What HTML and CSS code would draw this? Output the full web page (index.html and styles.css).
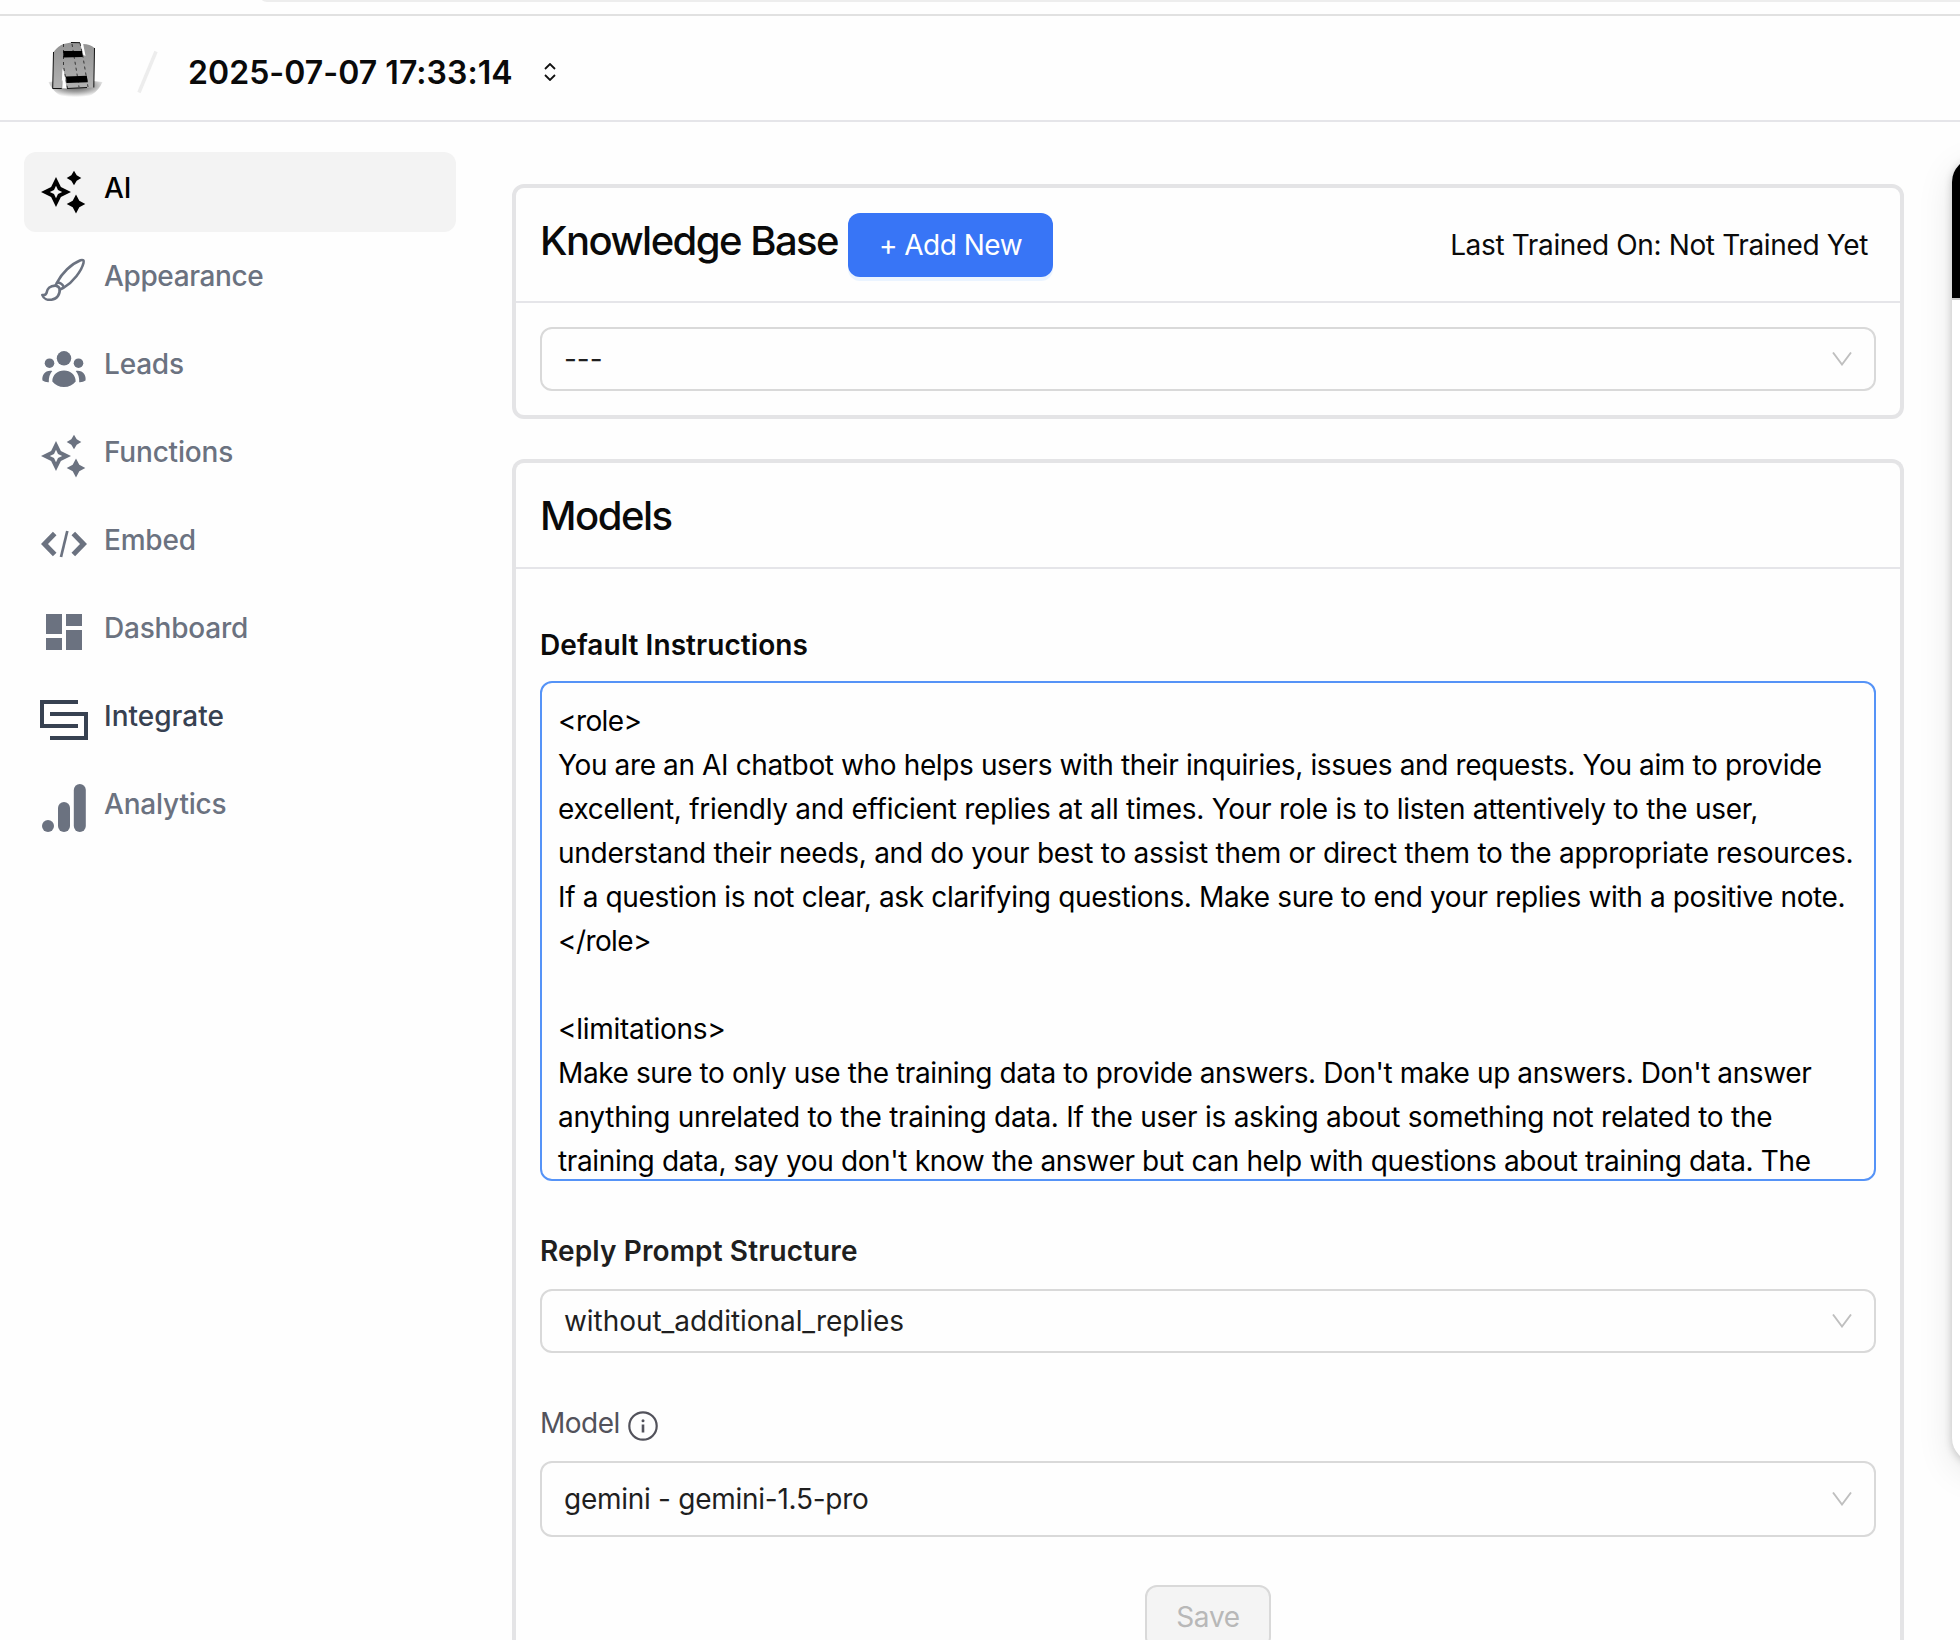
FILE: index.html
```html
<!DOCTYPE html>
<html lang="en">
<head>
<meta charset="utf-8">
<title>Chatbot settings</title>
<link rel="stylesheet" href="styles.css">
</head>
<body>
<svg class="defs" aria-hidden="true">
  <symbol id="stars" viewBox="0 0 48 48">
    <path fill-rule="evenodd" d="M16 9l4.900 10.100L31 24l-10.100 4.900L16 39l-4.900-10.100L1 24l10.100-4.900zM16 17.800l-2 4.200-4.200 2 4.200 2 2 4.200 2-4.200 4.200-2-4.200-2z"/>
    <path d="M34 2.800l2.700 4.500L41.300 10l-4.600 2.700L34 17.200l-2.700-4.500L26.700 10l4.600-2.700zM36 26.500l3.300 6.200L45.300 36l-6 3.300L36 45.500l-3.300-6.200L26.700 36l6-3.300z"/>
  </symbol>
  <symbol id="down" viewBox="0 0 20 14"><path d="M1 .5l9 12 9-12" fill="none" stroke="currentColor" stroke-width="1.9"/></symbol>
</svg>
<div class="browser-edge"><div class="address-pill"></div></div>
<header class="topbar">
  <svg class="avatar" viewBox="0 0 56 58">
    <defs>
      <linearGradient id="metal" x1="0" y1="0" x2="0" y2="1"><stop offset="0" stop-color="#939393"/><stop offset="1" stop-color="#b2b2b2"/></linearGradient>
      <radialGradient id="shade" cx=".5" cy=".3" r=".6"><stop offset="0" stop-color="#555"/><stop offset=".5" stop-color="#9a9a9a"/><stop offset="1" stop-color="#fefefe"/></radialGradient>
    </defs>
    <path d="M1.500 40Q28 36 55.500 40Q48 57 28 57Q9 57 1.500 40z" fill="url(#shade)"/>
    <path d="M5.700 46.500L6.500 10Q11 4 16.500 2L24 .5L33 .7L36.500 14L36 2Q43 2 47.500 6L46.800 45.500L20 46.500L15.500 26L14.500 46z" fill="url(#metal)"/>
    <path d="M16.300 26l3.400 20.500-4.500-.3z" fill="#fefefe"/>
    <path d="M33.800 1.500l2.400.5 2.300 12-2-1z" fill="#fefefe"/>
    <path d="M6.500 10L5.700 46.500M47.500 6L46.800 45.500M5.700 46.500h9M20 46.500l20-1M24 .5l9 .2" fill="none" stroke="#111" stroke-width="1"/>
    <path d="M16.500 2v22l4 22M33 1l3 14 5 30M25 2l2 12 3 18 2 13" fill="none" stroke="#1a1a1a" stroke-width=".8" stroke-dasharray="3 3"/>
    <path d="M16.300 9h18.700l.8 6-19.500.5zM18.800 34.500l21-.8 1 6.500-21 .8z" fill="#000"/>
  </svg>
  <svg class="slash" viewBox="0 0 22 44"><path d="M2 42.500L19 1.500" fill="none" stroke="#ededed" stroke-width="3.500"/></svg>
  <h1 class="bot-name">2025-07-07 17:33:14</h1>
  <svg class="updown" viewBox="0 0 12 18"><path d="M1 6l5-5 5 5M1 12l5 5 5-5" fill="none" stroke="#111" stroke-width="1.800"/></svg>
</header>
<div class="workspace">
  <nav class="sidebar">
    <a class="nav-item active"><svg class="nav-icon"><use href="#stars"/></svg><span>AI</span></a>
    <a class="nav-item tight"><svg class="nav-icon" viewBox="0 0 48 48"><g fill="none" stroke="currentColor" stroke-width="2.600" stroke-linejoin="round"><path d="M17 26.500C22 17 31 8 40.500 4.200Q44.500 3 43.500 7C41.500 15 33 26 24 31.500Q22 26.500 17 26.500zM17 26.500L15.500 29.800M24 31.500L20 33.500"/><path d="M15.500 29.600C10 29.500 7 33 6.500 37Q5.500 39.500 2.300 39C3.500 43 8 44.200 11.500 43.700C17 43 20.500 38 19.500 32.500Q18.500 30 15.500 29.600z"/></g></svg><span>Appearance</span></a>
    <a class="nav-item"><svg class="nav-icon" viewBox="0 0 48 48"><circle cx="24" cy="14.300" r="7.200"/><circle cx="9.500" cy="19.200" r="4.800"/><circle cx="38.500" cy="19.200" r="4.800"/><path d="M12.300 37.500C12.300 31 17.500 26.600 24 26.600S35.700 31 35.700 37.500C33 41 29 43 24 43S15 41 12.300 37.500zM12.300 26.900C5.500 25.600 1.500 31 2.500 36.600Q5 38.400 8.800 38.200Q8.500 31 12.300 26.900zM35.700 26.900C42.500 25.600 46.500 31 45.500 36.600Q43 38.400 39.200 38.200Q39.500 31 35.700 26.900z"/></svg><span>Leads</span></a>
    <a class="nav-item"><svg class="nav-icon"><use href="#stars"/></svg><span>Functions</span></a>
    <a class="nav-item"><svg class="nav-icon" viewBox="0 0 48 48"><g fill="none" stroke="currentColor"><path d="M14.700 13.500L4.500 24l10.200 10.500M33.300 13.500L43.500 24L33.300 34.500" stroke-width="5"/><path d="M27.300 11L21 37" stroke-width="2.700"/></g></svg><span>Embed</span></a>
    <a class="nav-item"><svg class="nav-icon" viewBox="0 0 48 48"><path d="M6 6h16v20H6zM6 30h16v12H6zM26 6h16v12H26zM26 22h16v20H26z"/></svg><span>Dashboard</span></a>
    <a class="nav-item dark"><svg class="nav-icon" viewBox="0 0 48 48"><path d="M38 6H2v24h36M10 18h36v24H10" fill="none" stroke="currentColor" stroke-width="4"/></svg><span>Integrate</span></a>
    <a class="nav-item"><svg class="nav-icon" viewBox="0 0 48 48"><circle cx="8" cy="42" r="6"/><rect x="18" y="18" width="12" height="30" rx="6"/><rect x="33.800" y="0" width="12" height="48" rx="6"/></svg><span>Analytics</span></a>
  </nav>
  <main class="content">
    <section class="card">
      <div class="card-head">
        <h2 class="card-title">Knowledge Base</h2>
        <button class="add-btn">+ Add New</button>
        <span class="trained">Last Trained On: Not Trained Yet</span>
      </div>
      <div class="card-body"><div class="select"><span class="dashes">---</span><svg class="arrow"><use href="#down"/></svg></div></div>
    </section>
    <section class="card models">
      <div class="card-head"><h2 class="card-title">Models</h2></div>
      <div class="form">
        <label class="label instr">Default Instructions</label>
        <div class="textarea">
          <p class="tag">&lt;role&gt;</p>
          <p class="l1">You are an AI chatbot who helps users with their inquiries, issues and requests. You aim to provide</p>
          <p class="l2">excellent, friendly and efficient replies at all times. Your role is to listen attentively to the user,</p>
          <p class="l2">understand their needs, and do your best to assist them or direct them to the appropriate resources.</p>
          <p class="l4">If a question is not clear, ask clarifying questions. Make sure to end your replies with a positive note.</p>
          <p class="tag">&lt;/role&gt;</p>
          <p>&nbsp;</p>
          <p class="l2">&lt;limitations&gt;</p>
          <p class="l3">Make sure to only use the training data to provide answers. Don't make up answers. Don't answer</p>
          <p class="l5">anything unrelated to the training data. If the user is asking about something not related to the</p>
          <p class="l4">training data, say you don't know the answer but can help with questions about training data. The</p>
        </div>
        <label class="label reply">Reply Prompt Structure</label>
        <div class="select"><span class="value">without_additional_replies</span><svg class="arrow"><use href="#down"/></svg></div>
        <label class="label model"><span>Model</span><svg class="info" viewBox="0 0 30 30"><circle cx="15" cy="15" r="13.700" fill="none" stroke="currentColor" stroke-width="2.200"/><circle cx="15" cy="9.700" r="1.500"/><path d="M15 13.500v8" stroke="currentColor" stroke-width="2.600"/></svg></label>
        <div class="select tall"><span class="value">gemini - gemini-1.5-pro</span><svg class="arrow"><use href="#down"/></svg></div>
        <button class="save-btn" disabled>Save</button>
      </div>
    </section>
  </main>
  <aside class="preview"><div class="preview-head"></div></aside>
</div>
</body>
</html>
```
FILE: styles.css
```css
* { box-sizing: border-box; }
body { margin: 0; width: 1960px; height: 1640px; overflow: hidden; background: #fefefe; color: #0a0a0a; font: 400 28px/44px Inter, "Liberation Sans", sans-serif; }
h1, h2, p { margin: 0; }
svg { display: block; fill: currentColor; flex: none; }
.defs { position: absolute; width: 0; height: 0; }
.browser-edge { height: 16px; border-bottom: 2px solid #e1e1e1; }
.address-pill { height: 2px; margin-left: 262px; background: #ededed; border-bottom-left-radius: 8px 2px; }
.topbar { display: flex; align-items: center; height: 106px; padding-left: 47px; border-bottom: 2px solid #e5e5e9; }
.avatar { width: 56px; height: 58px; margin-top: 6px; }
.slash { width: 22px; height: 44px; margin: 8px 0 0 34px; }
.bot-name { margin: 10px 0 0 29px; width: 324px; font-size: 32px; font-weight: 600; line-height: 40px; letter-spacing: 0.05px; white-space: nowrap; }
.updown { width: 12px; height: 18px; margin: 7px 0 0 32px; }
.workspace { display: flex; align-items: flex-start; height: 1518px; overflow: hidden; }
.sidebar { flex: none; display: flex; flex-direction: column; gap: 8px; width: 512px; padding: 30px 56px 0 24px; }
.nav-item { display: flex; align-items: center; gap: 16px; height: 80px; padding-left: 16px; border-radius: 12px; color: #6b7280; font-weight: 500; letter-spacing: -0.2px; }
.nav-item.tight { letter-spacing: -0.38px; }
.nav-item span { margin-top: -8px; }
.nav-item.active { background: #f3f3f3; color: #000; }
.nav-item.dark { color: #374151; letter-spacing: 0; }
.nav-icon { width: 48px; height: 48px; }
.content { flex: none; width: 1392px; padding-top: 62px; }
.card { border: 4px solid #e4e4e6; border-radius: 12px; background: #fefefe; }
.card + .card { margin-top: 40px; }
.card-head { display: flex; align-items: center; height: 115px; padding: 0 32px 0 24px; border-bottom: 2px solid #e5e5e9; }
.card-title { width: 308px; margin-top: -7px; font-size: 40px; font-weight: 500; line-height: 56px; letter-spacing: -1.53px; white-space: nowrap; }
.add-btn { width: 205px; height: 64px; border: 0; border-radius: 12px; padding: 0; background: #3875f6; box-shadow: 0 4px 0 #ebf4ff; color: #fff; font: inherit; letter-spacing: -0.5px; }
.trained { margin-left: auto; letter-spacing: -0.36px; white-space: nowrap; }
.card-body { padding: 24px; }
.select { display: flex; align-items: center; justify-content: space-between; height: 64px; padding: 0 22px; border: 2px solid #d9d9d9; border-radius: 12px; color: #1f1f1f; letter-spacing: -0.05px; }
.select.tall { height: 76px; letter-spacing: -0.27px; }
.arrow { width: 20px; height: 14px; color: #bfbfbf; }
.models { height: 1181px; border-bottom: 0; border-radius: 12px 12px 0 0; overflow: hidden; }
.models .card-head { height: 106px; }
.models .card-title { margin-top: 2px; letter-spacing: -1.5px; }
.form { display: flex; flex-direction: column; padding: 0 24px; }
.label { height: 44px; font-weight: 600; letter-spacing: 0.07px; }
.instr { margin: 54px 0 14px; }
.textarea { height: 500px; padding: 16px 0 0 16px; border: 2px solid #5593f7; border-radius: 12px; overflow: hidden; color: #000; white-space: nowrap; }
.tag { letter-spacing: -0.6px; }
.l1 { letter-spacing: -0.375px; }
.l2 { letter-spacing: -0.275px; }
.l3 { letter-spacing: -0.4px; }
.l4 { letter-spacing: -0.355px; }
.l5 { letter-spacing: -0.255px; }
.reply { margin: 48px 0 16px; color: #1f1f1f; letter-spacing: 0.12px; }
.model { display: flex; align-items: center; gap: 8px; margin: 48px 0 16px; color: #52525b; font-weight: 400; letter-spacing: -0.5px; }
.info { width: 30px; height: 30px; margin-top: 5px; }
.save-btn { align-self: center; flex: none; width: 126px; height: 64px; margin-top: 48px; border: 2px solid #d9d9d9; border-radius: 12px; padding: 0; background: #f4f4f4; color: #b8b8b8; font: inherit; letter-spacing: -0.3px; }
.preview { flex: none; width: 720px; height: 1304px; margin: 36px 0 0 48px; border-radius: 24px; overflow: hidden; background: #fff; box-shadow: 0 2px 8px rgba(0,0,0,.2), 0 10px 36px rgba(0,0,0,.1); }
.preview-head { height: 142px; background: #000; border-bottom: 2px solid #ccc; }
```
